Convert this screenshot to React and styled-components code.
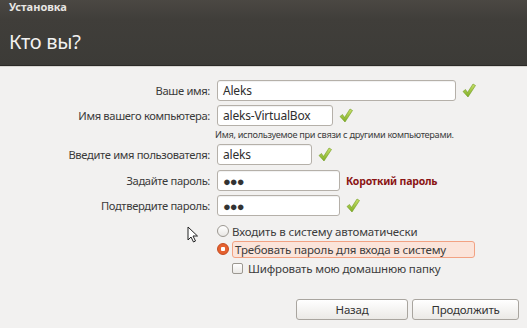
import React from 'react';
import styled, { createGlobalStyle } from 'styled-components';

const GlobalStyle = createGlobalStyle`
  html, body { margin: 0; padding: 0; }
  body {
    width: 527px;
    height: 328px;
    overflow: hidden;
    background: #f2f1f0;
    font-family: "Noto Sans", "Open Sans", sans-serif;
  }
`;

const Window = styled.div`
  position: relative;
  width: 527px;
  height: 328px;
  display: flex;
  flex-direction: column;
  background: #f2f1f0;
`;

const Header = styled.div`
  height: 65px;
  background: linear-gradient(#4b4843 0%, #403e3a 30%, #3c3b37 100%);
  border-bottom: 1px solid #2b2a27;
  box-shadow: 0 1px 0 #d8d6d2;
  padding: 0 9px;
  display: flex;
  flex-direction: column;
`;

const WindowTitle = styled.div`
  color: #e8e6e3;
  font-size: 11px;
  font-weight: bold;
  margin-top: 0;
  line-height: 14px;
`;

const PageTitle = styled.h1`
  margin: 16px 0 0 0;
  color: #f2f1f0;
  font-size: 20px;
  font-weight: normal;
  line-height: 24px;
  letter-spacing: -0.3px;
`;

const Form = styled.div`
  display: grid;
  grid-template-columns: 210px auto;
  column-gap: 7px;
  row-gap: 4px;
  margin-top: 14px;
  align-items: center;
`;

const Label = styled.div`
  text-align: right;
  font-size: 11.2px;
  letter-spacing: -0.35px;
  color: #3a3a3a;
  white-space: nowrap;
  line-height: 21px;
  margin-top: ${p => p.$shift || 0}px;
`;

const Field = styled.div`
  display: flex;
  align-items: center;
  gap: 6px;
  height: 21px;
  margin-top: ${p => p.$shift || 0}px;
`;

const Input = styled.div`
  box-sizing: border-box;
  width: ${p => p.$w}px;
  height: 21px;
  background: #fff;
  border: 1px solid #b5b0a9;
  border-radius: 3px;
  box-shadow: inset 0 1px 1px rgba(0,0,0,0.06);
  padding: 0 5px;
  font-size: 12px;
  letter-spacing: -0.2px;
  color: #2e2e2e;
  line-height: 19px;
  white-space: nowrap;
  overflow: hidden;
`;

const Dots = styled.span`
  font-size: 13px;
  letter-spacing: -1px;
  color: #333;
  position: relative;
  top: 1px;
`;

const Hint = styled.div`
  grid-column: 2;
  font-size: 9.2px;
  letter-spacing: -0.3px;
  color: #3c3c3c;
  line-height: 10px;
  white-space: nowrap;
  margin-left: -2px;
`;

const Warning = styled.span`
  color: #8a1414;
  font-weight: bold;
  font-size: 10.5px;
  letter-spacing: -0.2px;
  white-space: nowrap;
`;

const Options = styled.div`
  display: flex;
  flex-direction: column;
  margin: 7px 0 0 217px;
  gap: 1px;
`;

const Option = styled.div`
  display: flex;
  align-items: center;
  gap: 3px;
  height: ${p => p.$h || 16}px;
  margin-left: ${p => p.$indent || 0}px;
`;

const Radio = styled.span`
  box-sizing: border-box;
  width: 12px;
  height: 12px;
  border-radius: 50%;
  flex: none;
  border: 1px solid ${p => (p.$on ? '#c44a1e' : '#9c9891')};
  background: ${p => (p.$on ? 'radial-gradient(circle, #fff 0 2px, #e5612f 2.5px)' : 'linear-gradient(#fff, #e9e7e4)')};
`;

const Check = styled.span`
  box-sizing: border-box;
  width: 11px;
  height: 11px;
  border-radius: 2px;
  flex: none;
  border: 1px solid #9c9891;
  background: linear-gradient(#fff, #ebe9e6);
  margin-right: 2px;
`;

const OptionText = styled.span`
  font-size: 11.5px;
  letter-spacing: -0.15px;
  color: #3c3c3c;
  white-space: nowrap;
  line-height: 15px;
  ${p => p.$active && `
    box-sizing: border-box;
    width: 243px;
    height: 17px;
    padding: 0 2px;
    background: #fbe4da;
    border: 1px solid #f2a283;
    border-radius: 3px;
  `}
`;

const Buttons = styled.div`
  margin-top: auto;
  margin-bottom: 8px;
  display: flex;
  justify-content: flex-end;
  gap: 4px;
  padding-right: 8px;
`;

const Button = styled.button`
  box-sizing: border-box;
  width: ${p => p.$w}px;
  height: 21px;
  border: 1px solid #a9a59f;
  border-radius: 3px;
  background: linear-gradient(#ffffff, #ebe9e6);
  font-family: inherit;
  font-size: 11.5px;
  letter-spacing: -0.2px;
  color: #333;
  padding: 0;
`;

const Cursor = styled.svg`
  position: absolute;
  left: 187px;
  top: 226px;
`;

const Tick = () => (
  <svg width="14" height="15" viewBox="0 0 14 15">
    <defs>
      <linearGradient id="tk" x1="0" y1="0" x2="0" y2="1">
        <stop offset="0" stopColor="#c9e06a" />
        <stop offset="1" stopColor="#7fae24" />
      </linearGradient>
    </defs>
    <path d="M1 8.5 L3.5 6.5 L5.5 9.5 L11 1 L13.5 2.5 L6 14 Z" fill="url(#tk)" stroke="#6f9a1e" strokeWidth="0.6" strokeLinejoin="round" />
  </svg>
);

const rows = [
  { label: 'Ваше имя:', w: 239, value: 'Aleks', tick: true },
  { label: 'Имя вашего компьютера:', w: 116, value: 'aleks-VirtualBox', tick: true, hint: 'Имя, используемое при связи с другими компьютерами.' },
  { label: 'Введите имя пользователя:', w: 95, value: 'aleks', tick: true },
  { label: 'Задайте пароль:', w: 123, dots: true, warn: 'Короткий пароль', shift: 1 },
  { label: 'Подтвердите пароль:', w: 123, dots: true, tick: true },
];

export default function App() {
  return (
    <Window>
      <GlobalStyle />
      <Header>
        <WindowTitle>Установка</WindowTitle>
        <PageTitle>Кто вы?</PageTitle>
      </Header>

      <Form>
        {rows.map(r => (
          <React.Fragment key={r.label}>
            <Label $shift={r.shift}>{r.label}</Label>
            <Field $shift={r.shift}>
              <Input $w={r.w}>{r.dots ? <Dots>●●●</Dots> : r.value}</Input>
              {r.tick && <Tick />}
              {r.warn && <Warning>{r.warn}</Warning>}
            </Field>
            {r.hint && <Hint>{r.hint}</Hint>}
          </React.Fragment>
        ))}
      </Form>

      <Options>
        <Option>
          <Radio />
          <OptionText>Входить в систему автоматически</OptionText>
        </Option>
        <Option $h={18}>
          <Radio $on />
          <OptionText $active>Требовать пароль для входа в систему</OptionText>
        </Option>
        <Option $indent={15} $h={18}>
          <Check />
          <OptionText>Шифровать мою домашнюю папку</OptionText>
        </Option>
      </Options>

      <Buttons>
        <Button $w={112}>Назад</Button>
        <Button $w={107}>Продолжить</Button>
      </Buttons>

      <Cursor width="12" height="17" viewBox="0 0 12 17">
        <path d="M1 1 L1 14 L4 11 L6.5 16 L8.5 15 L6 10 L10.5 10 Z" fill="#fff" stroke="#222" strokeWidth="1" strokeLinejoin="round" />
      </Cursor>
    </Window>
  );
}
